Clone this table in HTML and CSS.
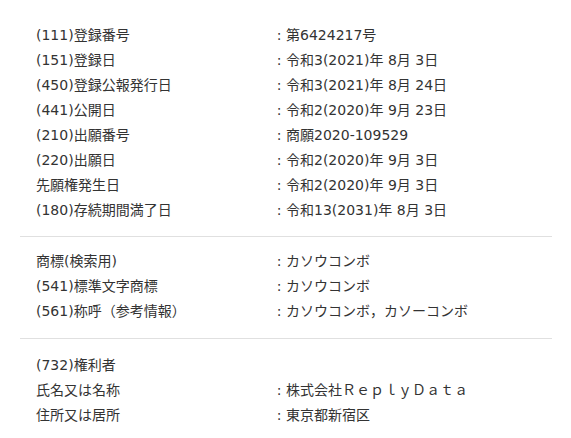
FILE: index.html
```html
<!DOCTYPE html>
<html lang="ja">
<head>
<meta charset="utf-8">
<link rel="stylesheet" href="styles.css">
</head>
<body>
<div class="page">
  <section class="group">
    <div class="row"><div class="label">(111)登録番号</div><div class="value"><span class="colon">:</span>第6424217号</div></div>
    <div class="row"><div class="label">(151)登録日</div><div class="value"><span class="colon">:</span>令和3(2021)年 8月 3日</div></div>
    <div class="row"><div class="label">(450)登録公報発行日</div><div class="value"><span class="colon">:</span>令和3(2021)年 8月 24日</div></div>
    <div class="row"><div class="label">(441)公開日</div><div class="value"><span class="colon">:</span>令和2(2020)年 9月 23日</div></div>
    <div class="row"><div class="label">(210)出願番号</div><div class="value"><span class="colon">:</span>商願2020-109529</div></div>
    <div class="row"><div class="label">(220)出願日</div><div class="value"><span class="colon">:</span>令和2(2020)年 9月 3日</div></div>
    <div class="row"><div class="label">先願権発生日</div><div class="value"><span class="colon">:</span>令和2(2020)年 9月 3日</div></div>
    <div class="row"><div class="label">(180)存続期間満了日</div><div class="value"><span class="colon">:</span>令和13(2031)年 8月 3日</div></div>
  </section>
  <section class="group">
    <div class="row"><div class="label">商標(検索用)</div><div class="value"><span class="colon">:</span>カソウコンボ</div></div>
    <div class="row"><div class="label">(541)標準文字商標</div><div class="value"><span class="colon">:</span>カソウコンボ</div></div>
    <div class="row"><div class="label">(561)称呼（参考情報）</div><div class="value"><span class="colon">:</span>カソウコンボ，カソーコンボ</div></div>
  </section>
  <section class="group">
    <div class="row"><div class="label">(732)権利者</div><div class="value"></div></div>
    <div class="row"><div class="label">氏名又は名称</div><div class="value"><span class="colon">:</span>株式会社ＲｅｐｌｙＤａｔａ</div></div>
    <div class="row"><div class="label">住所又は居所</div><div class="value"><span class="colon">:</span>東京都新宿区</div></div>
  </section>
</div>
</body>
</html>
```
FILE: styles.css
```css
html, body {
  margin: 0;
  padding: 0;
  background: #ffffff;
}
body {
  font-family: "DejaVu Sans", "Noto Sans CJK JP", sans-serif;
  font-size: 14px;
  color: #333333;
}
.page {
  width: 532px;
  margin-left: 20px;
  padding-top: 11px;
}
.group {
  padding: 12px 0 13px 16px;
}
.group + .group {
  border-top: 1px solid #e0e0e0;
}
.group:nth-child(2) {
  padding-bottom: 14px;
}
.group:nth-child(3) {
  padding-top: 14px;
}
.row {
  display: grid;
  grid-template-columns: 236px 1fr;
  height: 25px;
  line-height: 25px;
  white-space: nowrap;
}
.colon {
  display: inline-block;
  width: 14px;
  text-align: center;
}
```
